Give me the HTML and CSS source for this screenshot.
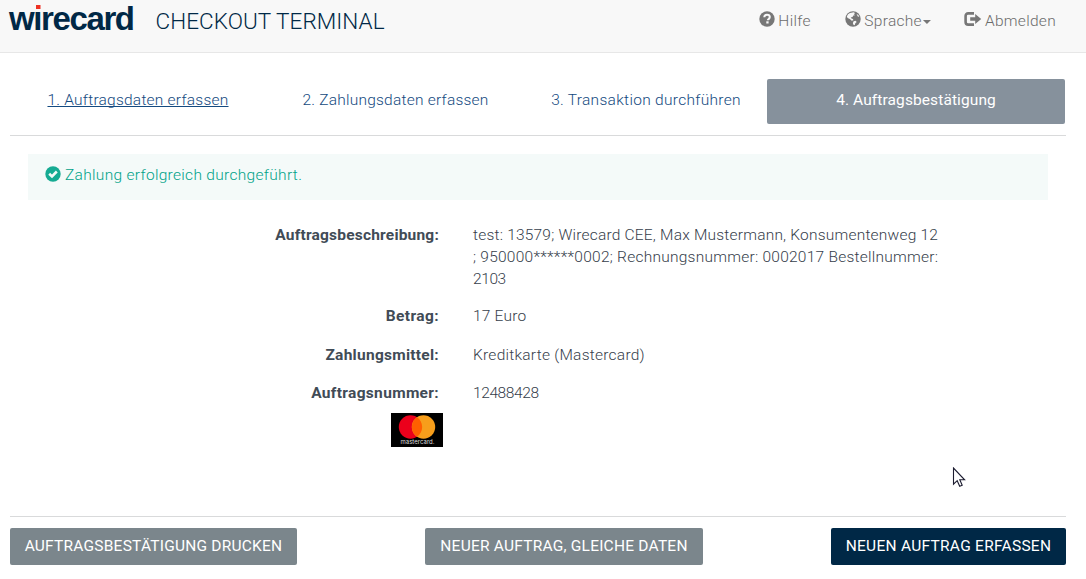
FILE: index.html
```html
<!DOCTYPE html>
<html lang="de">
<head>
<meta charset="utf-8">
<title>Checkout Terminal</title>
<link rel="stylesheet" href="styles.css">
</head>
<body>
<header class="navbar">
  <div class="brand">
    <svg class="logo" width="128" height="42" viewBox="0 0 128 42" role="img" aria-label="wirecard">
      <text class="logo-text" x="1" y="29.5" textLength="126" lengthAdjust="spacing">wirecard</text>
      <rect x="26" y="4" width="8" height="6" fill="#f8f8f8"/>
      <rect x="28" y="5" width="4.5" height="4" fill="#ee3124"/>
    </svg>
    <span class="title">CHECKOUT TERMINAL</span>
  </div>
  <nav class="menu">
    <a class="menu-item help"><svg width="16" height="16" viewBox="0 0 16 16"><circle cx="8" cy="8" r="7.7" fill="#777"/><path d="M5.3 6.3C5.3 4.5 6.3 3.7 8 3.7s2.8.9 2.8 2.4c0 2-2 1.9-2 3.2" fill="none" stroke="#f8f8f8" stroke-width="2"/><path d="M7.3 10.3h2.3v2.2H7.3z" fill="#f8f8f8"/></svg><span>Hilfe</span></a>
    <a class="menu-item lang"><svg width="16" height="16" viewBox="0 0 16 16"><circle cx="8" cy="8" r="7.7" fill="#777"/><path d="M5 1.9 8.8 1.2l1.4 1-1.5.7 1.3 1.3-1.7.4-.8 1.5-1.8.3.8 1.1 1.5.5.3 1.2-1.6.5-1.8-1.6L2.6 7 1.8 5.4 3 3.2zM11.6 2.9l1.8 1.2.9 1.7-1.5-.4zM8.6 10.2l1.9-.5 1.2 1.3-1.4 1.3-.6 1.9-1.5-.6-.3-1.7z" fill="#f8f8f8"/></svg><span>Sprache</span><i class="caret"></i></a>
    <a class="menu-item logout"><svg width="18" height="16" viewBox="0 0 18 16"><path d="M10 2.4H4.2Q1.6 2.4 1.6 5v6q0 2.6 2.6 2.6H10" fill="none" stroke="#777" stroke-width="2.6"/><path d="M6.2 6.2h5V3l6 5-6 5V9.8h-5z" fill="#777"/></svg><span>Abmelden</span></a>
  </nav>
</header>
<main class="page">
  <ol class="steps">
    <li class="step s1"><span>1. Auftragsdaten erfassen</span></li>
    <li class="step s2"><span>2. Zahlungsdaten erfassen</span></li>
    <li class="step s3"><span>3. Transaktion durchführen</span></li>
    <li class="step s4 active"><span>4. Auftragsbestätigung</span></li>
  </ol>
  <div class="alert">
    <svg width="16" height="16" viewBox="0 0 16 16"><circle cx="8" cy="8" r="7.7" fill="#16ab93"/><path d="M4.2 7.7 7 10.4 11.8 5.5" fill="none" stroke="#f4faf9" stroke-width="2.6"/></svg>
    <span class="alert-text">Zahlung erfolgreich durchgeführt.</span>
  </div>
  <dl class="details">
    <dt><span class="k1">Auftragsbeschreibung:</span></dt>
    <dd><span class="v1">test: 13579; Wirecard CEE, Max Mustermann, Konsumentenweg 12</span><br><span class="v2">; 950000******0002; Rechnungsnummer: 0002017 Bestellnummer:</span><br><span class="v5">2103</span></dd>
    <dt><span class="k2">Betrag:</span></dt>
    <dd>17 Euro</dd>
    <dt><span class="k3">Zahlungsmittel:</span></dt>
    <dd><span class="v3">Kreditkarte (Mastercard)</span></dd>
    <dt><span class="k4">Auftragsnummer:</span></dt>
    <dd><span class="v4">12488428</span></dd>
  </dl>
  <svg class="card" width="52" height="34" viewBox="0 0 52 34" role="img" aria-label="Mastercard">
    <rect width="52" height="34" fill="#000"/>
    <circle cx="19.5" cy="14" r="11.7" fill="#eb001b"/>
    <circle cx="32.5" cy="14" r="11.7" fill="#f79e1b"/>
    <path d="M26 4.3a11.7 11.7 0 0 1 0 19.4 11.7 11.7 0 0 1 0-19.4z" fill="#ff5f00"/>
    <text class="card-text" x="9.5" y="31" textLength="34">mastercard.</text>
  </svg>
  <div class="actions">
    <button class="btn b1"><span>AUFTRAGSBESTÄTIGUNG DRUCKEN</span></button>
    <button class="btn b2"><span>NEUER AUFTRAG, GLEICHE DATEN</span></button>
    <button class="btn b3 primary"><span>NEUEN AUFTRAG ERFASSEN</span></button>
  </div>
</main>
<svg class="pointer" width="14" height="21" viewBox="0 0 14 21"><path d="M1.5 1v16.2l3.7-3.5 2.5 5.6 2.5-1-2.4-5.5h4.8z" fill="#fff" stroke="#1c1c30" stroke-width="1.1"/></svg>
</body>
</html>
```
FILE: styles.css
```css
* { box-sizing: border-box; }
body {
  margin: 0;
  height: 579px;
  overflow: hidden;
  background: #fff;
  color: #36404b;
  font: 300 15.5px/22px Roboto, "Liberation Sans", sans-serif;
}
span { white-space: nowrap; }
svg { display: block; flex: none; }

.navbar {
  display: flex;
  justify-content: space-between;
  height: 53px;
  padding: 0 30px 0 8px;
  background: #f8f8f8;
  border-bottom: 1px solid #e7e7e7;
}
.brand { display: flex; gap: 19.5px; }
.logo-text { font: bold 33px "Liberation Sans", sans-serif; fill: #002846; }
.title { padding-top: 6px; font-size: 22.5px; line-height: 31px; color: #002846; letter-spacing: 0.07px; }
.menu { display: flex; padding-top: 10px; color: #6c6c6c; }
.menu-item { display: flex; gap: 3px; height: 22px; }
.menu-item svg { margin-top: 1px; }
.menu-item span { letter-spacing: 0.3px; }
.menu-item.lang { margin-left: 34.5px; }
.menu-item.logout { margin-left: 33px; }
.menu-item.help { gap: 3.5px; }
.caret {
  width: 8px;
  height: 4px;
  margin: 10px 0 0 -2px;
  background: #777;
  clip-path: polygon(0 0, 100% 0, 50% 100%);
}

.page { padding: 26px 20px 0 10px; }
.steps {
  display: grid;
  grid-template-columns: 256px 259px 242px 298px;
  width: 1056px;
  height: 57px;
  margin: 0;
  padding: 0;
  list-style: none;
  border-bottom: 1px solid #d9dadb;
}
.step { height: 45px; padding-top: 10px; text-align: center; color: #144a80; letter-spacing: 0.23px; }
.s1 span { text-decoration: underline 1px; text-underline-offset: 1px; text-decoration-skip-ink: none; }
.s3 { letter-spacing: 0.3px; }
.step.active { background: #86919c; border-radius: 2px; color: #fff; font-weight: 400; letter-spacing: 0.1px; }

.alert {
  display: flex;
  gap: 4px;
  width: 1020px;
  height: 46px;
  margin: 18px 0 0 18px;
  padding: 10px 17px;
  background: #f4faf9;
  color: #00a288;
}
.alert svg { margin-top: 2px; }
.alert-text { letter-spacing: 0.31px; }

.details {
  display: grid;
  grid-template-columns: 429px 1fr;
  column-gap: 34px;
  grid-template-rows: 81px 39px 38px 27px;
  margin: 24px 0 0;
}
dt { text-align: right; font-weight: 700; color: #414b56; }
dd { margin: 0; letter-spacing: 0.21px; }
.k1 { letter-spacing: 0.2px; }
.k2 { letter-spacing: 0.4px; }
.k3 { letter-spacing: 0.27px; }
.k4 { letter-spacing: 0.32px; }
.v2 { letter-spacing: 0.25px; }
.v3 { letter-spacing: 0.25px; }
.v4, .v5 { letter-spacing: -0.4px; }
.card { margin: 4px 0 0 381px; }
.card-text { font: 6px Inter, sans-serif; fill: #ddd; }

.actions {
  display: flex;
  justify-content: space-between;
  width: 1056px;
  margin-top: 69px;
  padding-top: 11px;
  border-top: 1px solid #d9dadb;
}
.btn {
  height: 37px;
  padding: 0 0 2px;
  border: 0;
  border-radius: 2px;
  background: #7b868c;
  color: #fff;
  font: 400 15.5px/22px Roboto, "Liberation Sans", sans-serif;
  letter-spacing: 0.22px;
}
.b1 { width: 287px; }
.b2 { width: 278px; }
.b3 { width: 235px; }
.primary { background: #002846; letter-spacing: 0.27px; }
.pointer { position: absolute; left: 952px; top: 467px; }
```
